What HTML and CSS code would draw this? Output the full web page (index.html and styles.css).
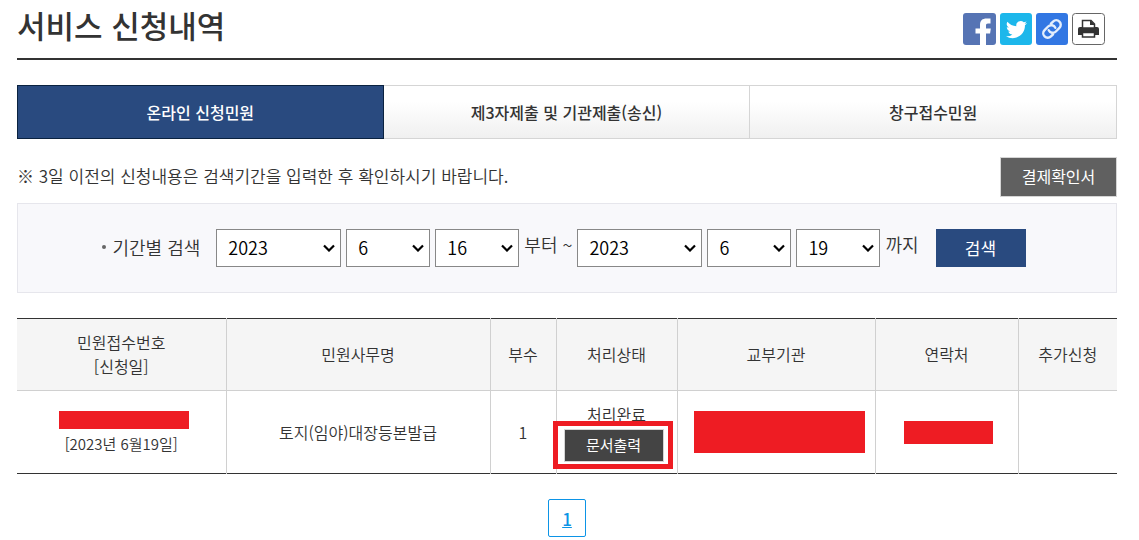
FILE: index.html
```html
<!DOCTYPE html>
<html lang="ko">
<head>
    <meta charset="UTF-8">
    <title>서비스 신청내역</title>
    <link rel="stylesheet" href="styles.css">
</head>
<body>
    <div class="page-head">
        <h1>서비스 신청내역</h1>
        <div class="sns">
            <a href="#" aria-label="facebook">
                <svg width="33" height="32" viewBox="0 0 33 32">
                    <rect width="33" height="32" rx="3" fill="#5674b4"/>
                    <path d="M17 32V20.500h-4.500v-5H17V12c0-4.500 2.500-6.500 6.500-6.500H27.500v5H25c-1.600 0-2 .8-2 2v3h4.800l-.7 5H23V32z" fill="#fff"/>
                </svg>
            </a>
            <a href="#" aria-label="twitter">
                <svg width="32" height="32" viewBox="0 0 32 32">
                    <rect width="32" height="32" rx="3" fill="#1cb7eb"/>
                    <path transform="translate(6 6) scale(.88)" d="M23.950 4.570a10 10 0 0 1-2.820.770 4.960 4.960 0 0 0 2.160-2.720 9.900 9.900 0 0 1-3.120 1.190 4.920 4.920 0 0 0-8.380 4.480C7.690 8.100 4.070 6.130 1.640 3.160a4.920 4.920 0 0 0 1.520 6.570 4.900 4.900 0 0 1-2.230-.610v.060a4.920 4.920 0 0 0 3.950 4.830 5 5 0 0 1-2.210.080 4.940 4.940 0 0 0 4.600 3.420A9.870 9.870 0 0 1 0 19.540a13.990 13.990 0 0 0 7.550 2.210c9.050 0 14-7.500 14-13.980 0-.210 0-.420-.020-.630a9.940 9.940 0 0 0 2.420-2.570z" fill="#fff"/>
                </svg>
            </a>
            <a href="#" aria-label="링크 복사">
                <svg width="32" height="32" viewBox="0 0 32 32">
                    <rect width="32" height="32" rx="3" fill="#3277e3"/>
                    <g transform="rotate(-45 16 16)" fill="none" stroke="#e4eefc" stroke-width="2.400" stroke-linecap="round">
                        <path d="M13 20.500h-3a4.500 4.500 0 0 1 0-9h5a4.500 4.500 0 0 1 4.200 6"/>
                        <path d="M19 11.500h3a4.500 4.500 0 0 1 0 9h-5a4.500 4.500 0 0 1-4.200-6"/>
                    </g>
                </svg>
            </a>
            <a href="#" aria-label="인쇄">
                <svg width="33" height="32" viewBox="0 0 33 32">
                    <rect x=".5" y=".5" width="32" height="31" rx="3" fill="#fff" stroke="#666"/>
                    <path d="M8 14h17a2 2 0 0 1 2 2v6H6v-6a2 2 0 0 1 2-2z" fill="#333"/>
                    <path d="M10.500 15V7.500h8.500l3.500 3.500V15z" fill="#fff" stroke="#333" stroke-width="1.500"/>
                    <path d="M10.500 19.500h12V24h-12z" fill="#fff" stroke="#333" stroke-width="1.500"/>
                    <path d="M18 7v5h5z" fill="#333"/>
                </svg>
            </a>
        </div>
    </div>

    <div class="tabs">
        <a href="#" class="tab on">온라인 신청민원</a>
        <a href="#" class="tab">제3자제출 및 기관제출(송신)</a>
        <a href="#" class="tab">창구접수민원</a>
    </div>

    <div class="notice">
        <p>※ 3일 이전의 신청내용은 검색기간을 입력한 후 확인하시기 바랍니다.</p>
        <button type="button" class="btn-receipt">결제확인서</button>
    </div>

    <form class="search">
        <label for="from-year" class="search-label">기간별 검색</label>
        <select id="from-year" class="year"><option>2023</option></select>
        <select id="from-month" aria-label="시작 월"><option>6</option></select>
        <select id="from-day" aria-label="시작 일"><option>16</option></select>
        <span class="word">부터 ~</span>
        <select id="to-year" class="year" aria-label="종료 년"><option>2023</option></select>
        <select id="to-month" aria-label="종료 월"><option>6</option></select>
        <select id="to-day" aria-label="종료 일"><option>19</option></select>
        <span class="word">까지</span>
        <button type="button" class="btn-search">검색</button>
    </form>

    <table class="list">
        <colgroup>
            <col class="col-no">
            <col class="col-name">
            <col class="col-count">
            <col class="col-state">
            <col class="col-org">
            <col class="col-tel">
            <col class="col-add">
        </colgroup>
        <thead>
            <tr>
                <th>민원접수번호<br>[신청일]</th>
                <th>민원사무명</th>
                <th>부수</th>
                <th>처리상태</th>
                <th>교부기관</th>
                <th>연락처</th>
                <th>추가신청</th>
            </tr>
        </thead>
        <tbody>
            <tr>
                <td class="date"><span class="mask mask-no"></span>[2023년 6월19일]</td>
                <td>토지(임야)대장등본발급</td>
                <td>1</td>
                <td class="state">
                    처리완료
                    <div class="print">
                        <button type="button" class="btn-print">문서출력</button>
                        <span class="highlight"></span>
                    </div>
                </td>
                <td><span class="mask mask-org"></span></td>
                <td><span class="mask mask-tel"></span></td>
                <td></td>
            </tr>
        </tbody>
    </table>

    <div class="paging">
        <a href="#">1</a>
    </div>
</body>
</html>
```

FILE: styles.css
```css
* {
    box-sizing: border-box;
}

body {
    margin: 0;
    padding: 0 22px 0 17px;
    background-color: #fff;
    color: #333;
    font-family: "Noto Sans CJK KR", sans-serif;
    font-size: 16px;
    font-weight: 350;
    line-height: 24px;
}

button,
select {
    font-family: inherit;
    font-weight: inherit;
}

button {
    padding: 0 0 2px;
    color: #fff;
    cursor: pointer;
}

.page-head {
    display: flex;
    justify-content: space-between;
    height: 60px;
    border-bottom: 2px solid #333;
}

h1 {
    margin: 0;
    font-size: 31px;
    font-weight: 500;
    line-height: 50px;
}

.sns {
    display: flex;
    gap: 4px;
    padding: 13px 12px 0 0;
}

.sns svg {
    display: block;
}

.tabs {
    display: grid;
    grid-template-columns: repeat(3, 1fr);
    margin-top: 25px;
}

.tab {
    height: 54px;
    border: 1px solid #d5d5d5;
    border-left: 0;
    background: linear-gradient(#fff 30%, #f0f0f0);
    color: #333;
    font-weight: 500;
    line-height: 52px;
    text-align: center;
    text-decoration: none;
}

.tab.on {
    border: 1px solid #0a2240;
    background: #294a7f;
    color: #fff;
}

.notice {
    display: flex;
    justify-content: space-between;
    margin-top: 18px;
    font-size: 17px;
}

.notice p {
    margin: 0;
    line-height: 38px;
}

.btn-receipt {
    width: 117px;
    height: 40px;
    border: 1px solid #d5d5d5;
    background-color: #606060;
    font-size: 16px;
    font-weight: 400;
}

.search {
    display: flex;
    align-items: center;
    justify-content: center;
    gap: 5px;
    height: 90px;
    margin-top: 6px;
    padding-right: 6px;
    border: 1px solid #e6e6ec;
    background-color: #f8f8fb;
    font-size: 18px;
}

.search-label {
    display: flex;
    align-items: center;
    gap: 6px;
    margin-right: 11px;
    padding-bottom: 2px;
}

.search-label::before {
    content: "";
    width: 4px;
    height: 4px;
    border-radius: 50%;
    background-color: #666;
}

.search select {
    width: 84px;
    height: 38px;
    padding: 0 20px 2px 11px;
    border: 1px solid #888;
    border-radius: 0;
    background: #fff url("data:image/svg+xml,%3Csvg xmlns='http://www.w3.org/2000/svg' width='12' height='8'%3E%3Cpath d='M1 1.500l5 5 5-5' fill='none' stroke='%23000' stroke-width='2.200'/%3E%3C/svg%3E") no-repeat right 5px center;
    appearance: none;
    color: #000;
    font-size: 18px;
}

.search .year {
    width: 125px;
}

.word {
    padding-bottom: 9px;
}

.btn-search {
    width: 90px;
    height: 38px;
    margin-left: 12px;
    border: 0;
    background-color: #294a7f;
    font-size: 17px;
    font-weight: 400;
}

.list {
    width: 100%;
    margin-top: 25px;
    border-top: 1px solid #333;
    border-bottom: 1px solid #333;
    border-collapse: collapse;
    table-layout: fixed;
}

.col-no { width: 19%; }
.col-name { width: 24%; }
.col-count { width: 6%; }
.col-state { width: 11%; }
.col-org { width: 18%; }
.col-tel { width: 13%; }
.col-add { width: 9%; }

.list th,
.list td {
    padding: 0;
    border-left: 1px solid #d0d0d0;
    text-align: center;
}

.list th:first-child,
.list td:first-child {
    border-left: 0;
}

.list th {
    height: 72px;
    padding-bottom: 2px;
    border-bottom: 1px solid #d0d0d0;
    background-color: #f5f5f5;
    font-weight: inherit;
}

.list td {
    height: 83px;
}

.list .date {
    padding-top: 3px;
    font-size: 15px;
}

.list .state {
    padding-bottom: 1px;
}

.mask {
    display: block;
    background-color: #ee1c23;
}

.mask-no {
    width: 130px;
    height: 18px;
    margin: 0 0 3px 42px;
}

.mask-org {
    width: 171px;
    height: 42px;
    margin-left: 16px;
}

.mask-tel {
    width: 89px;
    height: 23px;
    margin-left: 28px;
}

/* print button with the red frame over it */
.print {
    position: relative;
    width: 100px;
    margin: 3px 0 0 7px;
}

.btn-print {
    display: block;
    width: 100px;
    height: 33px;
    border: 1px solid #d5d5d5;
    background-color: #444;
    font-size: 15px;
    font-weight: 400;
}

.highlight {
    position: absolute;
    top: -8px;
    left: -11px;
    width: 120px;
    height: 48px;
    border: 5px solid #ee1c23;
    pointer-events: none;
}

.paging {
    display: flex;
    justify-content: center;
    margin-top: 25px;
}

.paging a {
    width: 38px;
    height: 38px;
    border: 1px solid #0c94e6;
    border-radius: 2px;
    color: #0c94e6;
    font-size: 17px;
    font-weight: 500;
    line-height: 38px;
    text-align: center;
}
```
